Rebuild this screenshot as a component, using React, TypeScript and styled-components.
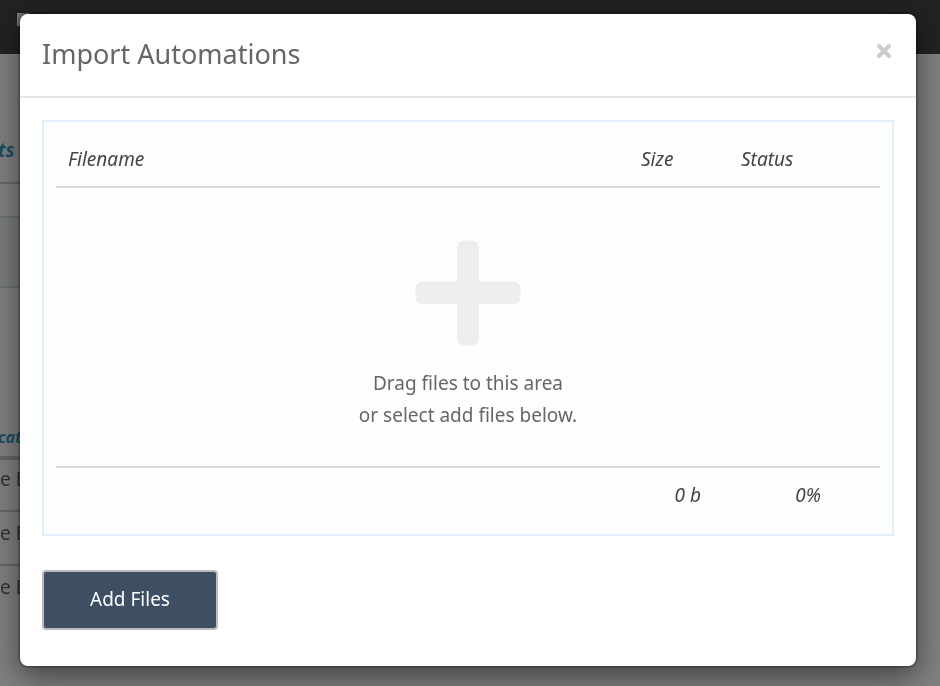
import React, { ReactNode } from 'react';
import styled, { createGlobalStyle } from 'styled-components';

const GlobalStyle = createGlobalStyle`
  * {
    box-sizing: border-box;
  }
  body {
    margin: 0;
    background: #fff;
    font-family: 'Noto Sans', 'Open Sans', sans-serif;
    font-size: 19px;
    line-height: 30px;
    color: #444;
  }
`;

const PageBehind = () => (
  <StyledPage aria-hidden="true">
    <div className="topbar">
      <span className="logo" />
    </div>
    <div className="content">
      <div className="heading">ts</div>
      <div className="panel" />
      <div className="column">cati</div>
      <div className="row first">e E</div>
      <div className="row">e E</div>
      <div className="row last">e E</div>
    </div>
  </StyledPage>
);

const StyledPage = styled.div`
  overflow: hidden;
  .topbar {
    height: 54px;
    padding: 13px 17px;
    background: #444;
  }
  .logo {
    display: block;
    width: 12px;
    height: 13px;
    background: #e8e8e8;
  }
  .content {
    margin-right: 40px;
    will-change: transform;
  }
  .heading {
    padding: 81px 0 17px;
    border-bottom: 2px solid #ccc;
    font-weight: bold;
    font-style: italic;
    text-indent: -2px;
    color: #3a9cc8;
  }
  .panel {
    height: 72px;
    margin-top: 32px;
    border: solid #d3e0e8;
    border-width: 2px 0;
    background: #f2f8f6;
  }
  .column {
    padding: 134px 0 4px;
    border-bottom: 4px solid #ccc;
    font-size: 16px;
    font-weight: bold;
    font-style: italic;
    text-indent: -2px;
    color: #3a9cc8;
  }
  .row {
    height: 54px;
    padding-top: 6px;
    border-bottom: 2px solid #ccc;
    color: #666;
  }
  .row.first {
    height: 52px;
    padding-top: 4px;
  }
  .row.last {
    border-bottom: none;
  }
`;

const CloseIcon = () => (
  <svg width="16" height="16" viewBox="0 0 16 16" aria-hidden="true">
    <path
      d="M3 3L13 13M13 3L3 13"
      stroke="#ccc"
      strokeWidth="4"
      strokeLinecap="round"
    />
  </svg>
);

const PlusIcon = () => (
  <svg width="106" height="106" viewBox="0 0 106 106" aria-hidden="true">
    <g fill="#eee">
      <rect x="42" y="0.5" width="22" height="105" rx="7" />
      <rect x="0.5" y="41.5" width="105" height="22.5" rx="7" />
    </g>
  </svg>
);

const Modal = (props: { title: string; children: ReactNode }) => {
  const { title, children } = props;
  return (
    <Backdrop>
      <StyledModal role="dialog" aria-modal="true" aria-labelledby="title">
        <ModalHeader>
          <h1 id="title">{title}</h1>
          <CloseButton type="button" aria-label="Close">
            <CloseIcon />
          </CloseButton>
        </ModalHeader>
        <ModalBody>{children}</ModalBody>
      </StyledModal>
    </Backdrop>
  );
};

const Backdrop = styled.div`
  position: fixed;
  inset: 0;
  overflow: auto;
  padding: 14px 24px 20px 20px;
  background: rgba(0, 0, 0, 0.5);
`;

const StyledModal = styled.div`
  border-radius: 8px;
  background: #fff;
  box-shadow:
    0 0 0 2px rgba(0, 0, 0, 0.2),
    0 10px 30px rgba(0, 0, 0, 0.5);
`;

const ModalHeader = styled.header`
  display: flex;
  justify-content: space-between;
  align-items: flex-start;
  padding: 22px 22px 24px;
  border-bottom: 2px solid #e5e5e5;
  h1 {
    margin: 0;
    font-size: 27px;
    font-weight: normal;
    line-height: 36px;
    color: #666;
  }
`;

const CloseButton = styled.button`
  display: flex;
  margin-top: 6px;
  padding: 1px 2px;
  border: none;
  background: none;
  cursor: pointer;
`;

const ModalBody = styled.div`
  padding: 22px 22px 36px;
`;

const FileBox = styled.div`
  padding: 0 12px;
  border: 2px solid #e2effb;
  background: #fdfefe;
`;

const FileTable = styled.table`
  width: 100%;
  border-collapse: separate;
  border-spacing: 0;
  table-layout: fixed;
  th,
  tfoot td {
    font-weight: normal;
    font-style: italic;
    color: #444;
  }
  th {
    padding: 22px 12px 12px;
    border-bottom: 2px solid #dadcdc;
    text-align: left;
  }
  th.status {
    padding-left: 28px;
  }
  tfoot td {
    padding: 12px 12px 24px;
    border-top: 2px solid #dadcdc;
    text-align: right;
  }
  .size {
    width: 84px;
  }
  .status {
    width: 120px;
  }
  .action {
    width: 47px;
  }
`;

const DropArea = styled.td`
  padding: 52px 0 35px;
  line-height: 32px;
  text-align: center;
  color: #666;
  svg {
    display: block;
    margin: 0 auto 21px;
  }
`;

const AddButton = styled.button`
  display: block;
  width: 176px;
  height: 60px;
  margin-top: 34px;
  padding: 0 0 2px;
  border: 2px solid #bbb;
  border-radius: 4px;
  background: #3e4f64;
  font: inherit;
  color: #fff;
  cursor: pointer;
`;

const App = () => (
  <>
    <GlobalStyle />
    <PageBehind />
    <Modal title="Import Automations">
      <FileBox>
        <FileTable>
          <thead>
            <tr>
              <th>Filename</th>
              <th className="size">Size</th>
              <th className="status">Status</th>
              <th className="action" />
            </tr>
          </thead>
          <tbody>
            <tr>
              <DropArea colSpan={4}>
                <PlusIcon />
                Drag files to this area
                <br />
                or select add files below.
              </DropArea>
            </tr>
          </tbody>
          <tfoot>
            <tr>
              <td />
              <td>0 b</td>
              <td>0%</td>
              <td />
            </tr>
          </tfoot>
        </FileTable>
      </FileBox>
      <AddButton type="button">Add Files</AddButton>
    </Modal>
  </>
);

export default App;
